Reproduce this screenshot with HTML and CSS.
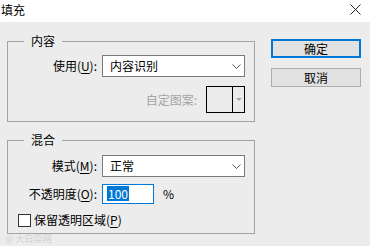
FILE: index.html
```html
<!DOCTYPE html>
<html lang="zh-CN">
<head>
    <meta charset="UTF-8">
    <title>填充</title>
    <link rel="stylesheet" href="styles.css">
</head>
<body>
    <div class="dialog">
        <div class="titlebar">
            <span class="title">填充</span>
            <svg class="close" width="11" height="11" viewBox="0 0 11 11">
                <path d="M0.5 0.5 L10.5 10.5 M10.5 0.5 L0.5 10.5" stroke="#222" stroke-width="1" fill="none"/>
            </svg>
        </div>

        <div class="content">
            <div class="groups">
                <fieldset class="group group-fill">
                    <legend>内容</legend>
                    <div class="row">
                        <span class="label">使用(<u>U</u>):</span>
                        <div class="select">
                            <span>内容识别</span>
                            <svg class="chevron" width="9" height="5" viewBox="0 0 9 5">
                                <path d="M0.5 0.5 L4.5 4.5 L8.5 0.5" stroke="#555" stroke-width="1" fill="none"/>
                            </svg>
                        </div>
                    </div>
                    <div class="row row-pattern">
                        <span class="muted">自定图案:</span>
                        <div class="swatch">
                            <span class="swatch-box"></span>
                            <span class="swatch-arrow"></span>
                        </div>
                    </div>
                </fieldset>

                <fieldset class="group group-blend">
                    <legend>混合</legend>
                    <div class="row">
                        <span class="label">模式(<u>M</u>):</span>
                        <div class="select">
                            <span>正常</span>
                            <svg class="chevron" width="9" height="5" viewBox="0 0 9 5">
                                <path d="M0.5 0.5 L4.5 4.5 L8.5 0.5" stroke="#555" stroke-width="1" fill="none"/>
                            </svg>
                        </div>
                    </div>
                    <div class="row row-opacity">
                        <span class="label">不透明度(<u>O</u>):</span>
                        <div class="input"><span class="selected">100</span></div>
                        <span class="unit">%</span>
                    </div>
                    <div class="row row-check">
                        <span class="checkbox"></span>
                        <span>保留透明区域(<u>P</u>)</span>
                    </div>
                </fieldset>
            </div>

            <div class="buttons">
                <button class="btn btn-default">确定</button>
                <button class="btn">取消</button>
            </div>
        </div>

        <div class="watermark">@ 大白菜网</div>
    </div>
</body>
</html>
```

FILE: styles.css
```css
* {
    box-sizing: border-box;
}
body {
    margin: 0;
    font-family: "Noto Sans CJK SC", "Microsoft YaHei", sans-serif;
    font-size: 12px;
    line-height: 16px;
    color: #000;
    background: #ececec;
}
.dialog {
    position: relative;
    width: 370px;
    height: 246px;
    background: #ececec;
    overflow: hidden;
}
.titlebar {
    display: flex;
    justify-content: space-between;
    align-items: center;
    height: 22px;
    background: #fff;
    padding: 0 9px 3px 1px;
}
.title {
    font-size: 12px;
}
.content {
    display: flex;
    gap: 16px;
    padding: 11px 0 0 7px;
}
.groups {
    width: 248px;
}
.group {
    margin: 0;
    padding: 0 9px 8px 0;
    border: 1px solid #a3a3a3;
    min-width: 0;
}
.group legend {
    margin-left: 16px;
    padding: 0 7px;
    line-height: 16px;
}
.group-blend {
    margin-top: 10px;
    padding-bottom: 5px;
}
.row {
    display: flex;
    align-items: center;
    margin-top: 6px;
}
.label {
    width: 89px;
    text-align: right;
    margin-right: 5px;
}
.label u, .row-check u {
    text-decoration-thickness: 1px;
    text-underline-offset: 2px;
}
.select {
    display: flex;
    justify-content: space-between;
    align-items: center;
    width: 143px;
    height: 22px;
    background: #fff;
    border: 1px solid #7a7a7a;
    padding: 0 3px 0 7px;
}
.row-pattern {
    justify-content: flex-end;
    margin-top: 9px;
}
.muted {
    color: #a6a6a6;
    margin-right: 9px;
}
.swatch {
    display: flex;
    width: 39px;
    height: 27px;
    border: 1px solid #000;
}
.swatch-box {
    width: 26px;
    border-right: 1px solid #000;
}
.swatch-arrow {
    flex: 1;
    display: flex;
    align-items: center;
    justify-content: center;
}
.swatch-arrow::after {
    content: "";
    border-left: 3px solid transparent;
    border-right: 3px solid transparent;
    border-top: 3px solid #a8a8a8;
}
.group-blend .row {
    margin-top: 7px;
}
.input {
    width: 52px;
    height: 20px;
    background: #fff;
    border: 1px solid #0078d7;
    padding: 1px 0 0 4px;
}
.selected {
    display: inline-block;
    background: #0078d7;
    color: #fff;
    line-height: 15px;
    padding: 0 1px;
}
.unit {
    margin-left: 9px;
}
.group-blend .row-check {
    margin-top: 8px;
    margin-left: 10px;
}
.checkbox {
    width: 13px;
    height: 13px;
    border: 1px solid #333;
    background: #fff;
    margin-right: 3px;
}
.buttons {
    display: flex;
    flex-direction: column;
    gap: 10px;
    padding-top: 6px;
}
.btn {
    width: 90px;
    height: 19px;
    padding: 0;
    font-family: inherit;
    font-size: 12px;
    line-height: 15px;
    color: #000;
    background: #e1e1e1;
    border: 1px solid #adadad;
}
.btn-default {
    border: 2px solid #0078d7;
}
.watermark {
    position: absolute;
    left: 5px;
    bottom: 2px;
    font-size: 9px;
    line-height: 10px;
    color: #d2d2d2;
}
```
